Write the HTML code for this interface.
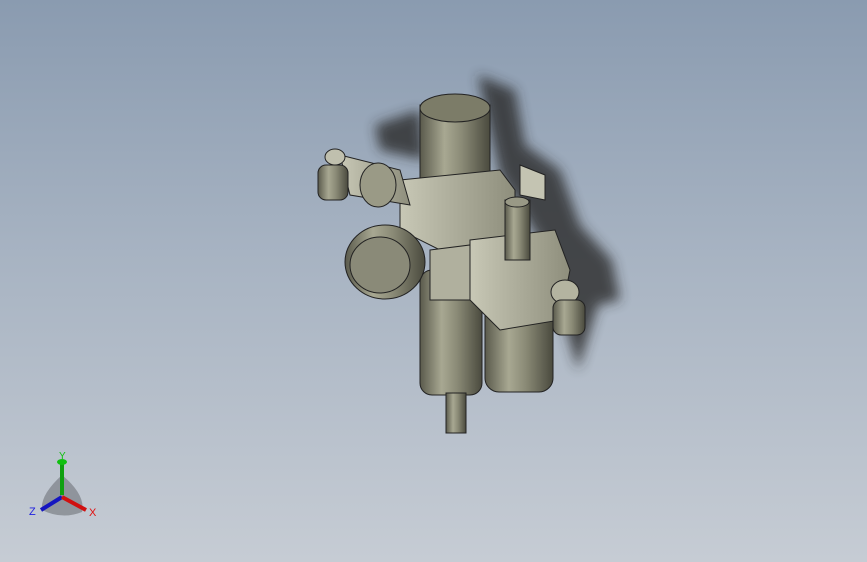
<!DOCTYPE html>
<html><head><style>
html,body{margin:0;padding:0}
body{width:867px;height:562px;overflow:hidden;background:linear-gradient(180deg,#8a9bb0 0%,#a7b3c2 45%,#c6ccd4 100%);font-family:"Liberation Sans",sans-serif}
</style></head><body>
<svg width="867" height="562" viewBox="0 0 867 562" xmlns="http://www.w3.org/2000/svg" style="display:block">
<defs>
<linearGradient id="cyl" x1="0" x2="1"><stop offset="0" stop-color="#5a5a4c"/><stop offset="0.35" stop-color="#a8a892"/><stop offset="0.6" stop-color="#8a8a76"/><stop offset="1" stop-color="#4a4a3e"/></linearGradient>
<linearGradient id="blk" x1="0" x2="1"><stop offset="0" stop-color="#c8c8b6"/><stop offset="1" stop-color="#8e8e7c"/></linearGradient>
<filter id="bl"><feGaussianBlur stdDeviation="6"/></filter>
</defs>
<!-- shadow -->
<g filter="url(#bl)" opacity="0.8" fill="#2a2a2a">
<path d="M478 75 L515 90 L525 145 L560 170 L580 225 L612 260 L620 300 L598 305 L578 370 L565 325 L545 250 L500 175 Z"/>
<path d="M375 125 L420 110 L425 160 L380 150 Z"/>
</g>
<!-- left bowl -->
<rect x="420" y="270" width="62" height="125" rx="12" fill="url(#cyl)" stroke="#222"/>
<rect x="446" y="393" width="20" height="40" fill="url(#cyl)" stroke="#222"/>
<!-- right bowl -->
<rect x="485" y="300" width="68" height="92" rx="14" fill="url(#cyl)" stroke="#222"/>
<!-- top cylinder -->
<rect x="420" y="105" width="70" height="75" fill="url(#cyl)" stroke="#222"/>
<ellipse cx="455" cy="108" rx="35" ry="14" fill="#7c7c68" stroke="#222"/>
<!-- body blocks -->
<path d="M400 180 L500 170 L515 190 L515 240 L440 250 L400 230 Z" fill="url(#blk)" stroke="#222"/>
<path d="M430 250 L470 245 L470 300 L430 300 Z" fill="#b0b09e" stroke="#222"/>
<path d="M470 240 L555 230 L570 270 L560 320 L500 330 L470 300 Z" fill="url(#blk)" stroke="#222"/>
<rect x="505" y="200" width="25" height="60" fill="url(#cyl)" stroke="#222"/>
<ellipse cx="517" cy="202" rx="12" ry="5" fill="#999986" stroke="#222"/>
<!-- gauge -->
<ellipse cx="385" cy="262" rx="40" ry="37" fill="url(#cyl)" stroke="#222"/>
<ellipse cx="380" cy="265" rx="30" ry="28" fill="#8a8a78" stroke="#222"/>
<!-- left fitting -->
<path d="M340 155 L400 170 L410 205 L350 195 Z" fill="url(#blk)" stroke="#222"/>
<ellipse cx="378" cy="185" rx="18" ry="22" fill="#9a9a86" stroke="#222"/>
<rect x="318" y="165" width="30" height="35" rx="8" fill="url(#cyl)" stroke="#222"/>
<ellipse cx="335" cy="157" rx="10" ry="8" fill="#c0c0ae" stroke="#222"/>
<!-- right fitting -->
<ellipse cx="565" cy="292" rx="14" ry="12" fill="#b4b4a0" stroke="#222"/>
<rect x="553" y="300" width="32" height="35" rx="8" fill="url(#cyl)" stroke="#222"/>
<path d="M520 165 L545 175 L545 200 L520 195 Z" fill="#c4c4b2" stroke="#222"/>
<!-- triad -->
<path d="M62 475 Q40 495 42 510 Q62 520 82 512 Q86 495 62 475 Z" fill="#7a7f86" opacity="0.7"/>
<line x1="62" y1="495" x2="62" y2="462" stroke="#10a010" stroke-width="4"/>
<ellipse cx="62" cy="462" rx="5" ry="3" fill="#10c010"/>
<line x1="62" y1="497" x2="41" y2="510" stroke="#1515c0" stroke-width="4"/>
<line x1="62" y1="497" x2="86" y2="510" stroke="#d01010" stroke-width="4"/>
<text x="59" y="459" font-size="10" fill="#10c010">Y</text>
<text x="29" y="515" font-size="11" fill="#2020e0">Z</text>
<text x="89" y="516" font-size="11" fill="#e01010">X</text>
</svg>
</body></html>
